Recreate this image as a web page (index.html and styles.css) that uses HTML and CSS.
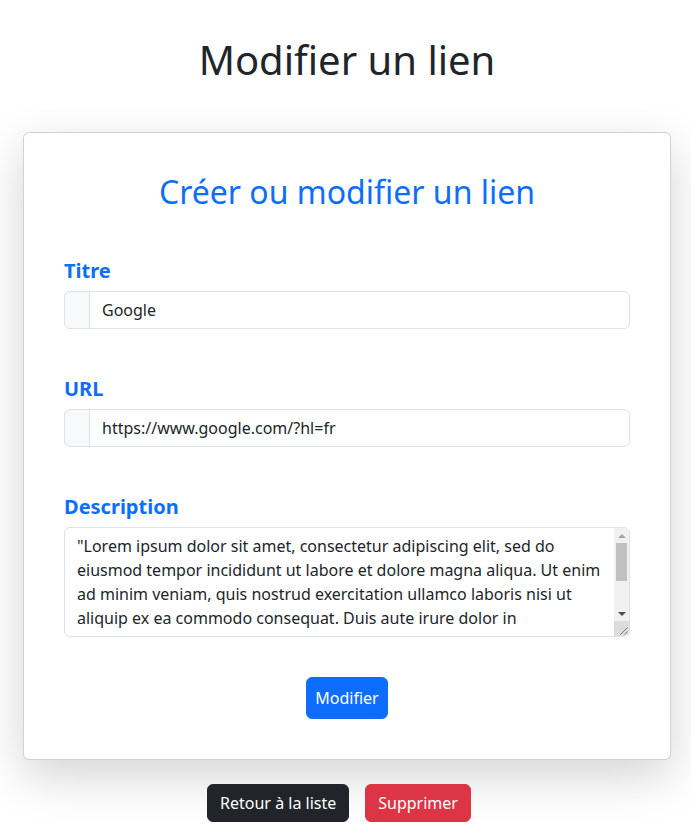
FILE: index.html
```html
<!DOCTYPE html>
<html lang="fr">
<head>
<meta charset="utf-8">
<title>Modifier un lien</title>
<link rel="stylesheet" href="styles.css">
</head>
<body>
<main class="page">
  <h1 class="page-title">Modifier un lien</h1>
  <section class="card">
    <h2 class="card-title">Créer ou modifier un lien</h2>
    <form class="link-form">
      <div class="field">
        <label class="field-label" for="titre">Titre</label>
        <div class="input-group">
          <span class="addon"></span>
          <input id="titre" class="control" type="text" value="Google">
        </div>
      </div>
      <div class="field">
        <label class="field-label" for="url">URL</label>
        <div class="input-group">
          <span class="addon"></span>
          <input id="url" class="control" type="text" value="https://www.google.com/?hl=fr">
        </div>
      </div>
      <div class="field field-last">
        <label class="field-label" for="description">Description</label>
        <div class="textarea-wrap">
          <textarea id="description" class="control textarea" rows="4">"Lorem ipsum dolor sit amet, consectetur adipiscing elit, sed do eiusmod tempor incididunt ut labore et dolore magna aliqua. Ut enim ad minim veniam, quis nostrud exercitation ullamco laboris nisi ut aliquip ex ea commodo consequat. Duis aute irure dolor in reprehenderit in voluptate velit esse cillum dolore eu fugiat nulla pariatur. Excepteur sint occaecat cupidatat non proident, sunt in culpa qui officia deserunt mollit anim id est laborum."</textarea>
          <div class="scrollbar" aria-hidden="true">
            <div class="sb-button"><span class="arrow-up"></span></div>
            <div class="sb-track"><div class="sb-thumb"></div></div>
            <div class="sb-button"><span class="arrow-down"></span></div>
            <div class="sb-corner">
              <svg width="15" height="15" viewBox="0 0 15 15"><path d="M13.5 6.5 L6.5 13.5 M13.5 10.5 L10.5 13.5" stroke="#7a7a7a" stroke-width="1" fill="none"/></svg>
            </div>
          </div>
        </div>
      </div>
      <div class="form-actions">
        <button type="button" class="btn btn-primary btn-square">Modifier</button>
      </div>
    </form>
  </section>
  <div class="page-actions">
    <a class="btn btn-dark" href="#">Retour à la liste</a>
    <button type="button" class="btn btn-danger">Supprimer</button>
  </div>
</main>
</body>
</html>
```
FILE: styles.css
```css
* { box-sizing: border-box; }

body {
  margin: 0;
  background: #fff;
  color: #212529;
  font-family: "Noto Sans", "Open Sans", sans-serif;
  font-size: 16px;
  line-height: 1.5;
}

.page {
  padding: 0 20px 0 23px;
}

.page-title {
  margin: 36px 0 48px;
  font-size: 40px;
  font-weight: 400;
  line-height: 1.2;
  text-align: center;
}

.card {
  background: #fff;
  border: 1px solid rgba(0, 0, 0, 0.175);
  border-radius: 6px;
  box-shadow: 0 16px 48px rgba(0, 0, 0, 0.175);
  padding: 40px;
}

.card-title {
  margin: 0 0 48px;
  color: #0d6efd;
  font-size: 32px;
  font-weight: 400;
  line-height: 1.2;
  text-align: center;
}

.field {
  margin-bottom: 48px;
}

.field-last {
  margin-bottom: 40px;
}

.field-label {
  display: block;
  margin-bottom: 8px;
  color: #0d6efd;
  font-size: 20px;
  font-weight: 700;
  line-height: 1.2;
}

.input-group {
  display: flex;
}

.addon {
  flex: 0 0 26px;
  background: #f8f9fa;
  border: 1px solid #dee2e6;
  border-radius: 6px 0 0 6px;
}

.control {
  display: block;
  width: 100%;
  min-width: 0;
  margin: 0;
  padding: 6px 12px;
  font-family: inherit;
  font-size: 16px;
  line-height: 1.5;
  color: #212529;
  background: #fff;
  border: 1px solid #dee2e6;
  border-radius: 6px;
  outline: none;
}

.input-group .control {
  flex: 1 1 auto;
  margin-left: -1px;
  border-radius: 0 6px 6px 0;
}

.textarea-wrap {
  position: relative;
}

.textarea {
  padding-right: 27px;
  resize: none;
  overflow: hidden;
}

.scrollbar {
  position: absolute;
  top: 1px;
  right: 1px;
  bottom: 1px;
  width: 15px;
  display: flex;
  flex-direction: column;
  background: #f1f1f1;
  border-radius: 0 5px 5px 0;
  overflow: hidden;
}

.sb-button {
  flex: 0 0 15px;
  display: flex;
  align-items: center;
  justify-content: center;
}

.arrow-up {
  width: 0;
  height: 0;
  border-left: 4px solid transparent;
  border-right: 4px solid transparent;
  border-bottom: 4px solid #a3a3a3;
}

.arrow-down {
  width: 0;
  height: 0;
  border-left: 4px solid transparent;
  border-right: 4px solid transparent;
  border-top: 4px solid #505050;
}

.sb-track {
  flex: 1 1 auto;
  padding: 0 2px;
}

.sb-thumb {
  height: 38px;
  background: #c1c1c1;
}

.sb-corner {
  flex: 0 0 15px;
  background: #dcdcdc;
  line-height: 0;
}

.form-actions {
  display: flex;
  justify-content: center;
}

.btn {
  display: inline-block;
  padding: 6px 12px;
  font-family: inherit;
  font-size: 16px;
  line-height: 1.5;
  color: #fff;
  text-decoration: none;
  border: 1px solid transparent;
  border-radius: 6px;
  cursor: pointer;
}

.btn-square {
  padding: 8px;
}

.btn-primary { background: #0d6efd; border-color: #0d6efd; }
.btn-dark { background: #212529; border-color: #212529; }
.btn-danger { background: #dc3545; border-color: #dc3545; }

.page-actions {
  display: flex;
  justify-content: center;
  gap: 16px;
  margin-top: 24px;
  padding-right: 16px;
}
```
